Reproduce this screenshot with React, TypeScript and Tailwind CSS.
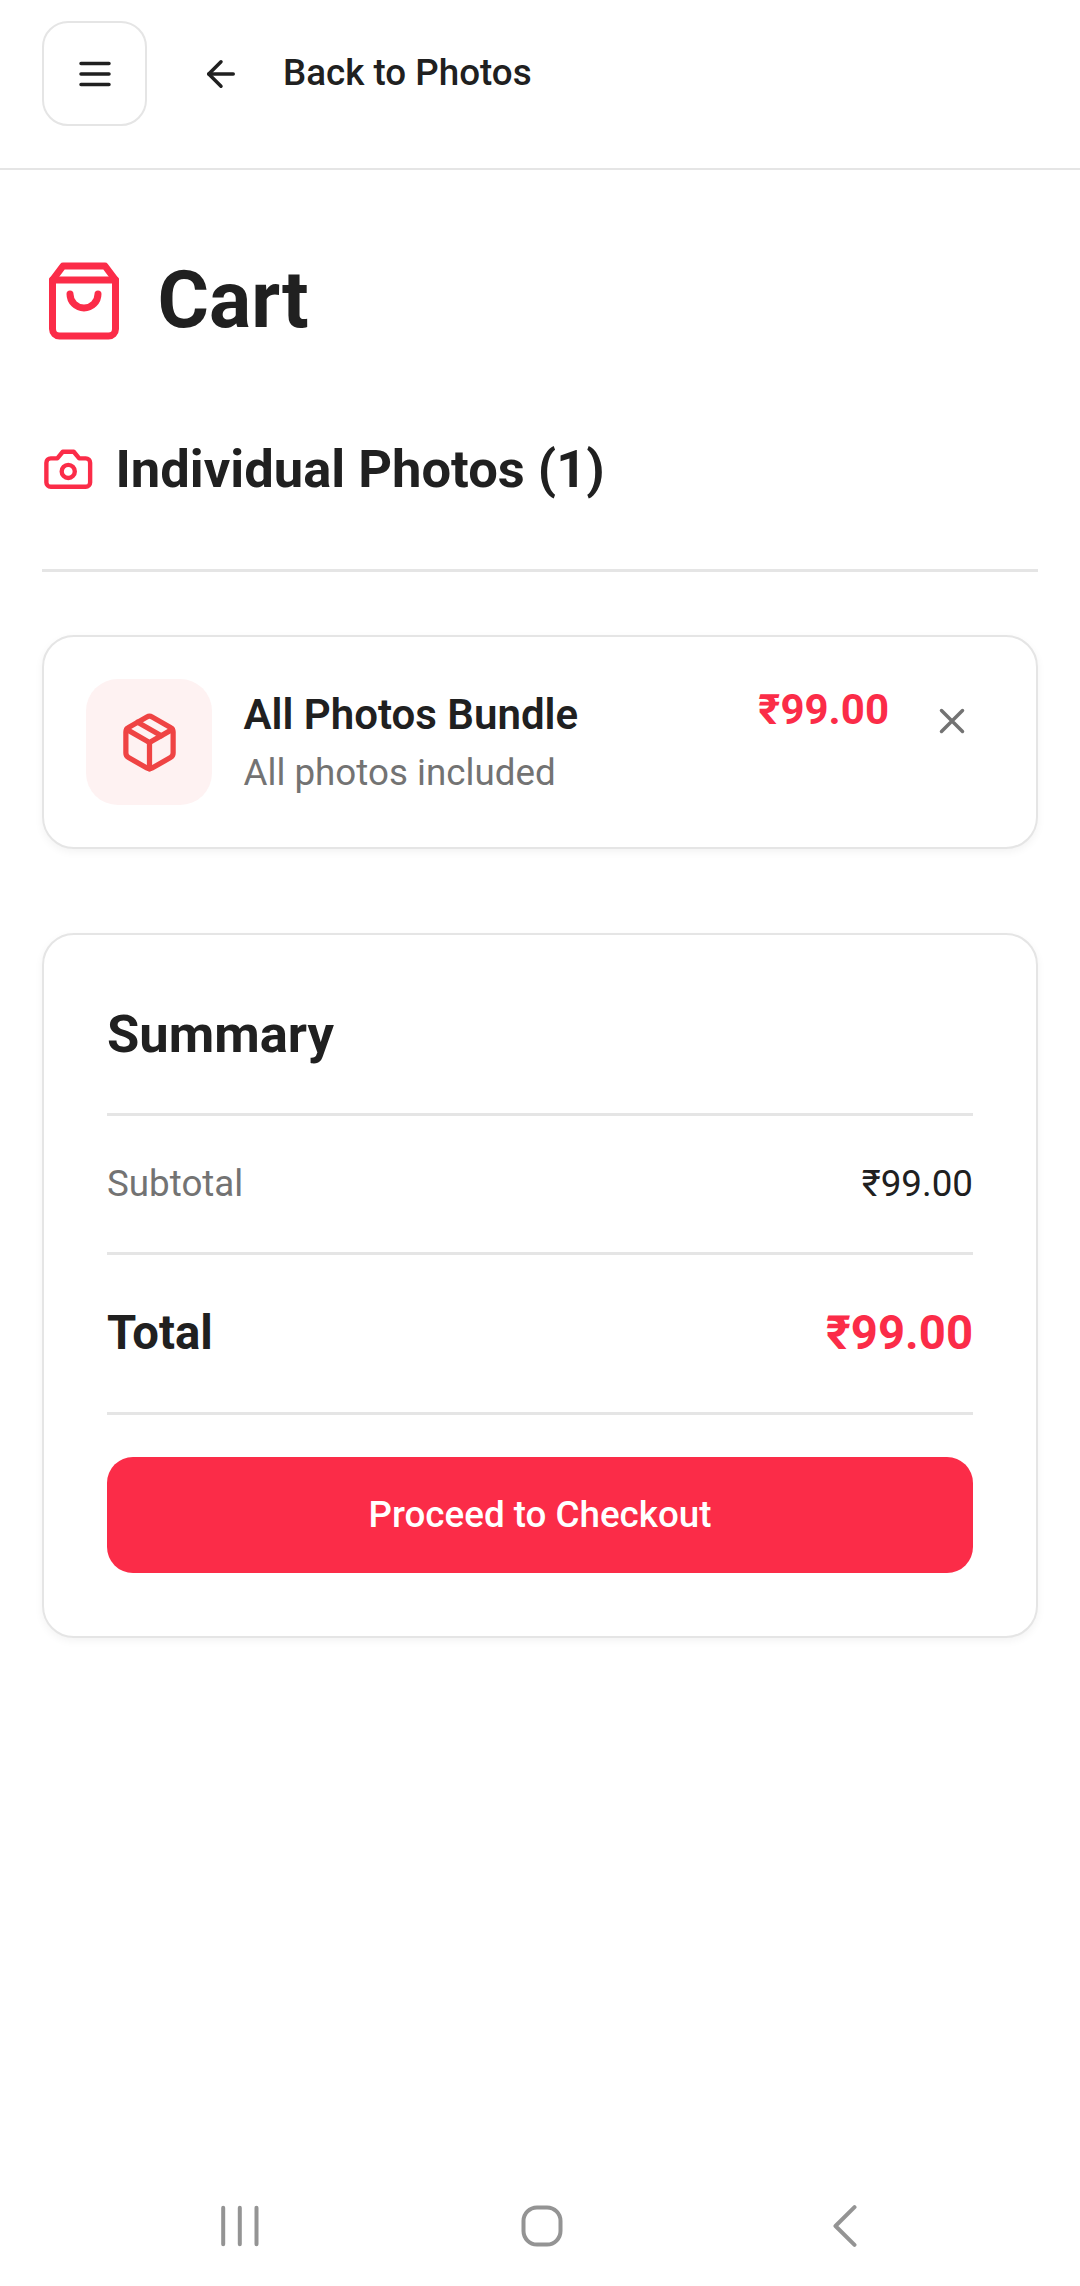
import type { ReactNode } from "react";

type IconProps = { className?: string; children: ReactNode };

function Icon({ className, children }: IconProps) {
  return (
    <svg
      viewBox="0 0 24 24"
      fill="none"
      stroke="currentColor"
      strokeWidth={2}
      strokeLinecap="round"
      strokeLinejoin="round"
      className={className}
    >
      {children}
    </svg>
  );
}

function Header() {
  return (
    <header className="flex h-[170px] items-start border-b-2 border-[#e5e5e5] px-[42px] pt-[21px]">
      <button className="flex size-[105px] items-center justify-center rounded-[26px] border-2 border-[#e5e5e5]">
        <Icon className="size-[42px]">
          <path d="M4 6h16M4 12h16M4 18h16" />
        </Icon>
      </button>
      <a className="ml-[53px] flex h-[105px] items-center text-[36.75px] leading-[52px] font-medium">
        <Icon className="mr-[41px] size-[42px]">
          <path d="m12 19-7-7 7-7" />
          <path d="M19 12H5" />
        </Icon>
        <span className="-mt-[1px]">Back to Photos</span>
      </a>
    </header>
  );
}

function CartItem() {
  return (
    <article className="mt-[63px] flex h-[214px] rounded-[32px] border-2 border-[#e5e5e5] bg-white p-[42px] shadow-[0_3px_8px_rgba(0,0,0,0.05)]">
      <div className="flex size-[126px] items-center justify-center rounded-[32px] bg-[#fef2f2] text-[#ef4444]">
        <Icon className="size-[63px]">
          <path d="M21 8a2 2 0 0 0-1-1.73l-7-4a2 2 0 0 0-2 0l-7 4A2 2 0 0 0 3 8v8a2 2 0 0 0 1 1.73l7 4a2 2 0 0 0 2 0l7-4A2 2 0 0 0 21 16Z" />
          <path d="m3.3 7 8.7 5 8.7-5" />
          <path d="M12 22V12" />
          <path d="m7.5 4.27 9 5.15" />
        </Icon>
      </div>
      <div className="ml-[31.5px] flex-1 pt-[4px]">
        <h3 className="text-[42px] leading-[63px] font-semibold">All Photos Bundle</h3>
        <p className="text-[36.75px] leading-[54px] text-[#737373]">All photos included</p>
      </div>
      <span className="text-[42px] leading-[62px] font-bold text-[#fb2c48]">₹99.00</span>
      <button className="mr-[21px] ml-[42px] flex h-[84px] w-[42px] items-center justify-center text-[#737373]">
        <Icon className="size-[42px]">
          <path d="M18 6 6 18M6 6l12 12" />
        </Icon>
      </button>
    </article>
  );
}

function Summary() {
  return (
    <section className="mt-[84px] flex h-[705px] flex-col rounded-[32px] border-2 border-[#e5e5e5] bg-white p-[63px] shadow-[0_3px_8px_rgba(0,0,0,0.05)]">
      <h2 className="h-[115px] text-[52.5px] leading-[73px] font-bold">Summary</h2>
      <div className="flex h-[139px] items-center justify-between border-t-3 border-[#e5e5e5] text-[36.75px]">
        <span className="text-[#737373]">Subtotal</span>
        <span>₹99.00</span>
      </div>
      <div className="flex h-[163px] items-center justify-between border-y-3 border-[#e5e5e5] text-[47.25px] font-bold">
        <span>Total</span>
        <span className="text-[#fb2c48]">₹99.00</span>
      </div>
      <button className="mt-[42px] h-[116px] rounded-[26px] bg-[#fb2c48] text-[36.75px] font-medium text-white">
        Proceed to Checkout
      </button>
    </section>
  );
}

function SystemNav() {
  return (
    <nav className="flex h-[120px] items-center justify-between px-[219px] text-[#949494]">
      <svg viewBox="0 0 42 42" className="size-[42px]" stroke="currentColor" strokeWidth={4} strokeLinecap="round">
        <path d="M4.2 2.7v36.5M20.8 2.7v36.5M37.5 2.7v36.5" />
      </svg>
      <svg viewBox="0 0 42 42" className="ml-[4px] size-[42px]" fill="none" stroke="currentColor" strokeWidth={4}>
        <rect x="2.5" y="2.5" width="37" height="37" rx="13.5" />
      </svg>
      <svg
        viewBox="0 0 42 42"
        className="size-[42px]"
        fill="none"
        stroke="currentColor"
        strokeWidth={4}
        strokeLinecap="round"
        strokeLinejoin="round"
      >
        <path d="M35.500 2.200 16.500 21l19 18.800" />
      </svg>
    </nav>
  );
}

export default function App() {
  return (
    <div className="flex h-[2286px] w-[1080px] flex-col bg-white font-['Roboto',sans-serif] text-[#202020]">
      <Header />
      <main className="flex-1 px-[42px] pt-[84px]">
        <h1 className="flex h-[94px] items-center gap-[31.5px] text-[78.75px] leading-[94px] font-bold">
          <Icon className="size-[84px] text-[#fb2c48]">
            <path d="M6 2 3 6v14a2 2 0 0 0 2 2h14a2 2 0 0 0 2-2V6l-3-4Z" />
            <path d="M3 6h18" />
            <path d="M16 10a4 4 0 0 1-8 0" />
          </Icon>
          <span className="-mt-[3px]">Cart</span>
        </h1>
        <h2 className="mt-[84px] flex h-[140px] items-start gap-[21px] border-b-3 border-[#e5e5e5] text-[52.5px] leading-[74px] font-bold">
          <Icon className="mt-[11px] size-[52.5px] text-[#fb2c48]">
            <path d="M14.500 4h-5L7 7H4a2 2 0 0 0-2 2v9a2 2 0 0 0 2 2h16a2 2 0 0 0 2-2V9a2 2 0 0 0-2-2h-3l-2.500-3z" />
            <circle cx="12" cy="13" r="3" />
          </Icon>
          Individual Photos (1)
        </h2>
        <CartItem />
        <Summary />
      </main>
      <SystemNav />
    </div>
  );
}
